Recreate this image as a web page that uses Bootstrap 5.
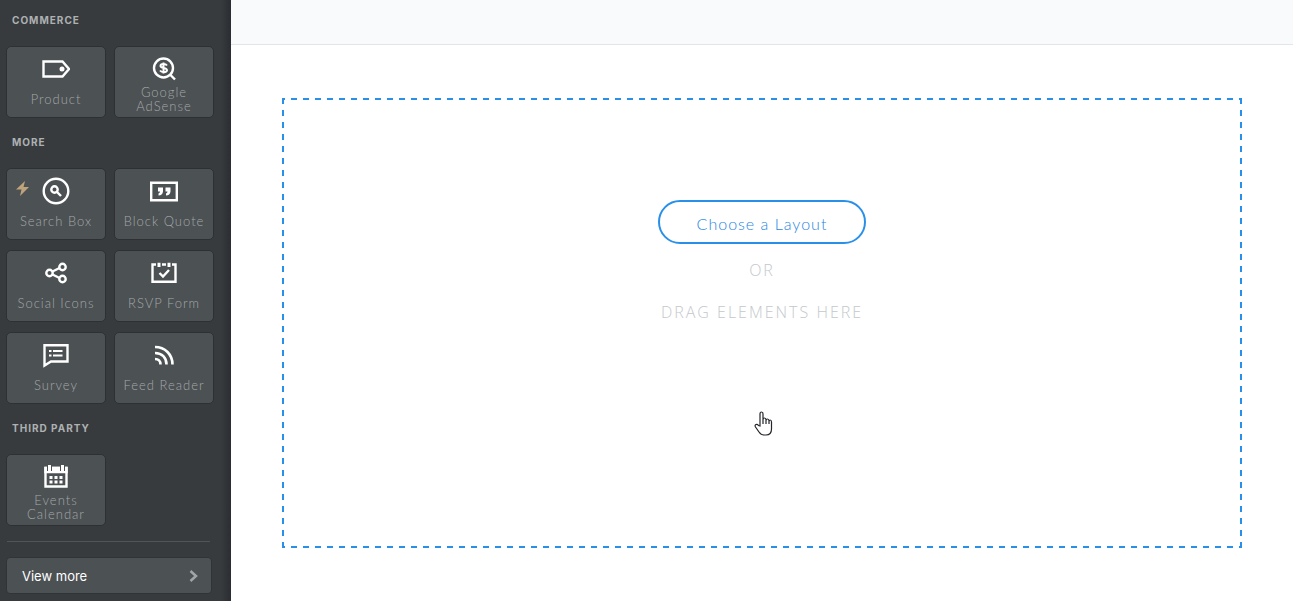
<!DOCTYPE html>
<html lang="en">
<head>
<meta charset="utf-8">
<meta name="viewport" content="width=device-width, initial-scale=1">
<title>Site editor</title>
<link href="https://cdn.jsdelivr.net/npm/bootstrap@5.3.0/dist/css/bootstrap.min.css" rel="stylesheet">
<style>
body { font-family: Lato, "Open Sans", sans-serif; background: #fff; }
.palette { width: 231px; padding: 0 19px 0 6px; background: linear-gradient(to left, #2a2e32, #373b3e 10px); }
.palette h2 { margin: 0; padding: 0 6px; height: 46px; font: 700 10px/40px Inter, sans-serif; letter-spacing: 1px; color: #aeb1b2; }
.tiles { display: grid; grid-template-columns: 100px 100px; gap: 10px 8px; margin-bottom: 4px; }
.tile { height: 72px; padding: 8px 0 0; border: 1px solid #2d3134; border-radius: 5px; background: #4c5153; color: #a3a7a9; font-size: 13px; font-weight: 300; line-height: 14px; letter-spacing: 1px; }
.tile svg { width: 28px; height: 28px; flex: none; fill: none; stroke: #fff; stroke-width: 2.4; }
.tile-name { display: flex; align-items: center; height: 28px; margin-top: 2px; }
.bolt { left: 9px; top: 12px; }
.tile .bolt svg { width: 13px; height: 15px; display: block; fill: #bfa37c; stroke: none; }
.rule { height: 1px; margin: 15px 2px 15px 1px; background: #505557; }
.view-more { height: 37px; width: 206px; padding: 0 13px 0 15px; border: 1px solid #303437; border-radius: 4px; background: #4c5153; color: #fff; font: 400 13px/20px Inter, sans-serif; }
.topbar { height: 45px; background: #f8fafc; border-bottom: 1px solid #e1e6ea; }
.canvas { padding: 53px 51px; }
.dropzone {
  --dash: #2990ea 0 6px, transparent 6px 12px;
  height: 450px; padding-top: 102px; color: #c3c8cc; font: 300 16px/24px "Open Sans", sans-serif; letter-spacing: 2px;
  background:
    repeating-linear-gradient(to right, #2990ea 0 3px, transparent 3px 9px, #2990ea 9px 12px) top / 100% 2px no-repeat,
    repeating-linear-gradient(to right, #2990ea 0 3px, transparent 3px 9px, #2990ea 9px 12px) bottom / 100% 2px no-repeat,
    repeating-linear-gradient(to bottom, var(--dash)) left / 2px 100% no-repeat,
    repeating-linear-gradient(to bottom, var(--dash)) right / 2px 100% no-repeat;
}
.choose { width: 208px; height: 44px; padding: 3px 0 0; border: 2px solid #2990ea; border-radius: 22px; background: #fff; color: #1f86e2; font: 300 16px/24px Lato, sans-serif; letter-spacing: 1px; }
.or-text { margin: 14px 0 18px; }
.pointer { left: 50%; top: 313px; margin-left: -8px; }
</style>
</head>
<body>
<div class="d-flex min-vh-100">
  <aside class="palette flex-shrink-0">
    <h2>COMMERCE</h2>
    <div class="tiles">
      <button class="tile d-flex flex-column align-items-center"><svg viewBox="0 0 28 28"><path d="M1.500 6.500H20.500L27 14 20.500 21.500H1.500Z"/><circle cx="20" cy="14" r="2.500" fill="#fff" stroke="none"/></svg><span class="tile-name">Product</span></button>
      <button class="tile d-flex flex-column align-items-center"><svg viewBox="0 0 28 28"><circle cx="13.500" cy="13" r="9.500"/><path d="M20 19.500L25 24.500"/><path d="M17 10.500C15.500 8.500 10.500 8.500 10.500 11S17 12.500 17 15.200 11.500 17.500 10 15.500M13.500 7.500V18.500" stroke-width="2"/></svg><span class="tile-name">Google<br>AdSense</span></button>
    </div>
    <h2>MORE</h2>
    <div class="tiles">
      <button class="tile d-flex flex-column align-items-center position-relative"><span class="bolt position-absolute"><svg viewBox="0 0 13 15"><path d="M9 0L0 8.500H5.500L4 15 13 6H7.500Z"/></svg></span><svg viewBox="0 0 28 28"><circle cx="14" cy="14" r="12.300"/><circle cx="12.500" cy="12.500" r="3.200"/><path d="M15 15L19 19"/></svg><span class="tile-name">Search Box</span></button>
      <button class="tile d-flex flex-column align-items-center"><svg viewBox="0 0 28 28"><path d="M1.200 5.700H26.800V23.300H1.200Z"/><path d="M8 10.500H13V14.500Q12.500 18.500 8.500 18.500V16.500Q10 16 10 14.500H8ZM15.500 10.500H20.500V14.500Q20 18.500 16 18.500V16.500Q17.500 16 17.500 14.500H15.500Z" fill="#fff" stroke="none"/></svg><span class="tile-name">Block Quote</span></button>
      <button class="tile d-flex flex-column align-items-center"><svg viewBox="0 0 28 28"><circle cx="7.500" cy="14" r="3.200"/><circle cx="20.500" cy="8" r="3.200"/><circle cx="20.500" cy="20" r="3.200"/><path d="M10.500 12.500L17.500 9M10.500 15.500L17.500 19"/></svg><span class="tile-name">Social Icons</span></button>
      <button class="tile d-flex flex-column align-items-center"><svg viewBox="0 0 28 28"><path d="M6 5.500H2.500V22.800H25.500V5.500H22M12 5.500H16"/><path d="M9 3.800V8M19 3.800V8" stroke-width="3"/><path d="M9.500 14L13 17.500 19 11"/></svg><span class="tile-name">RSVP Form</span></button>
      <button class="tile d-flex flex-column align-items-center"><svg viewBox="0 0 28 28"><path d="M2.500 4.200H25.500V20.500H9L2.500 24.500Z"/><path d="M7 10H9.500M11 10H20.500M7 14.500H9.500M11 14.500H20.500" stroke-width="2"/></svg><span class="tile-name">Survey</span></button>
      <button class="tile d-flex flex-column align-items-center"><svg viewBox="0 0 28 28"><path d="M5 6C15 6 22.500 13.500 22.500 23.500M5 12C12 12 16.500 16.500 16.500 23.500M5 18C8.500 18 10.500 20 10.500 23.500" stroke-width="2.600"/></svg><span class="tile-name">Feed Reader</span></button>
    </div>
    <h2>THIRD PARTY</h2>
    <div class="tiles">
      <button class="tile d-flex flex-column align-items-center"><svg viewBox="0 0 28 28"><path d="M3.500 5H24.500V23.500H3.500Z"/><path d="M3.500 5H24.500V9H3.500Z" fill="#fff"/><path d="M7.500 1V8M20.500 1V8" stroke="#4c5153" stroke-width="5"/><path d="M7.500 2V8M20.500 2V8" stroke-width="3"/><path d="M7.500 14.500H10.500M12.500 14.500H15.500M17.500 14.500H20.500M7.500 19H10.500M12.500 19H15.500M17.500 19H20.500" stroke-width="3"/></svg><span class="tile-name">Events<br>Calendar</span></button>
    </div>
    <div class="rule"></div>
    <button class="view-more d-flex align-items-center justify-content-between">View more<svg width="9" height="12" viewBox="0 0 9 12" fill="none" stroke="#a2a5a7" stroke-width="2.500"><path d="M1.500 1L7 6 1.500 11"/></svg></button>
  </aside>
  <main class="flex-grow-1">
    <div class="topbar"></div>
    <div class="canvas">
      <div class="dropzone position-relative d-flex flex-column align-items-center">
        <button class="choose">Choose a Layout</button>
        <div class="or-text">OR</div>
        <div>DRAG ELEMENTS HERE</div>
        <svg class="pointer position-absolute" width="19" height="26" viewBox="0 0 19 26"><path d="M6 15V3Q6 1 7.500 1T9 3V9Q9 7 10.500 7T12 9V10Q12 8 13.500 8T15 10V11Q15 9 16.200 9T17.500 11V18Q17.500 24 12 24H10Q7 24 5 21L1.500 16Q.5 14 2 13.500T4.500 14.500Z M9 9V13M12 10V13M15 11V13" fill="#fff" stroke="#22252a" stroke-width="1.200"/></svg>
      </div>
    </div>
  </main>
</div>
<script src="https://cdn.jsdelivr.net/npm/bootstrap@5.3.0/dist/js/bootstrap.bundle.min.js"></script>
</body>
</html>
